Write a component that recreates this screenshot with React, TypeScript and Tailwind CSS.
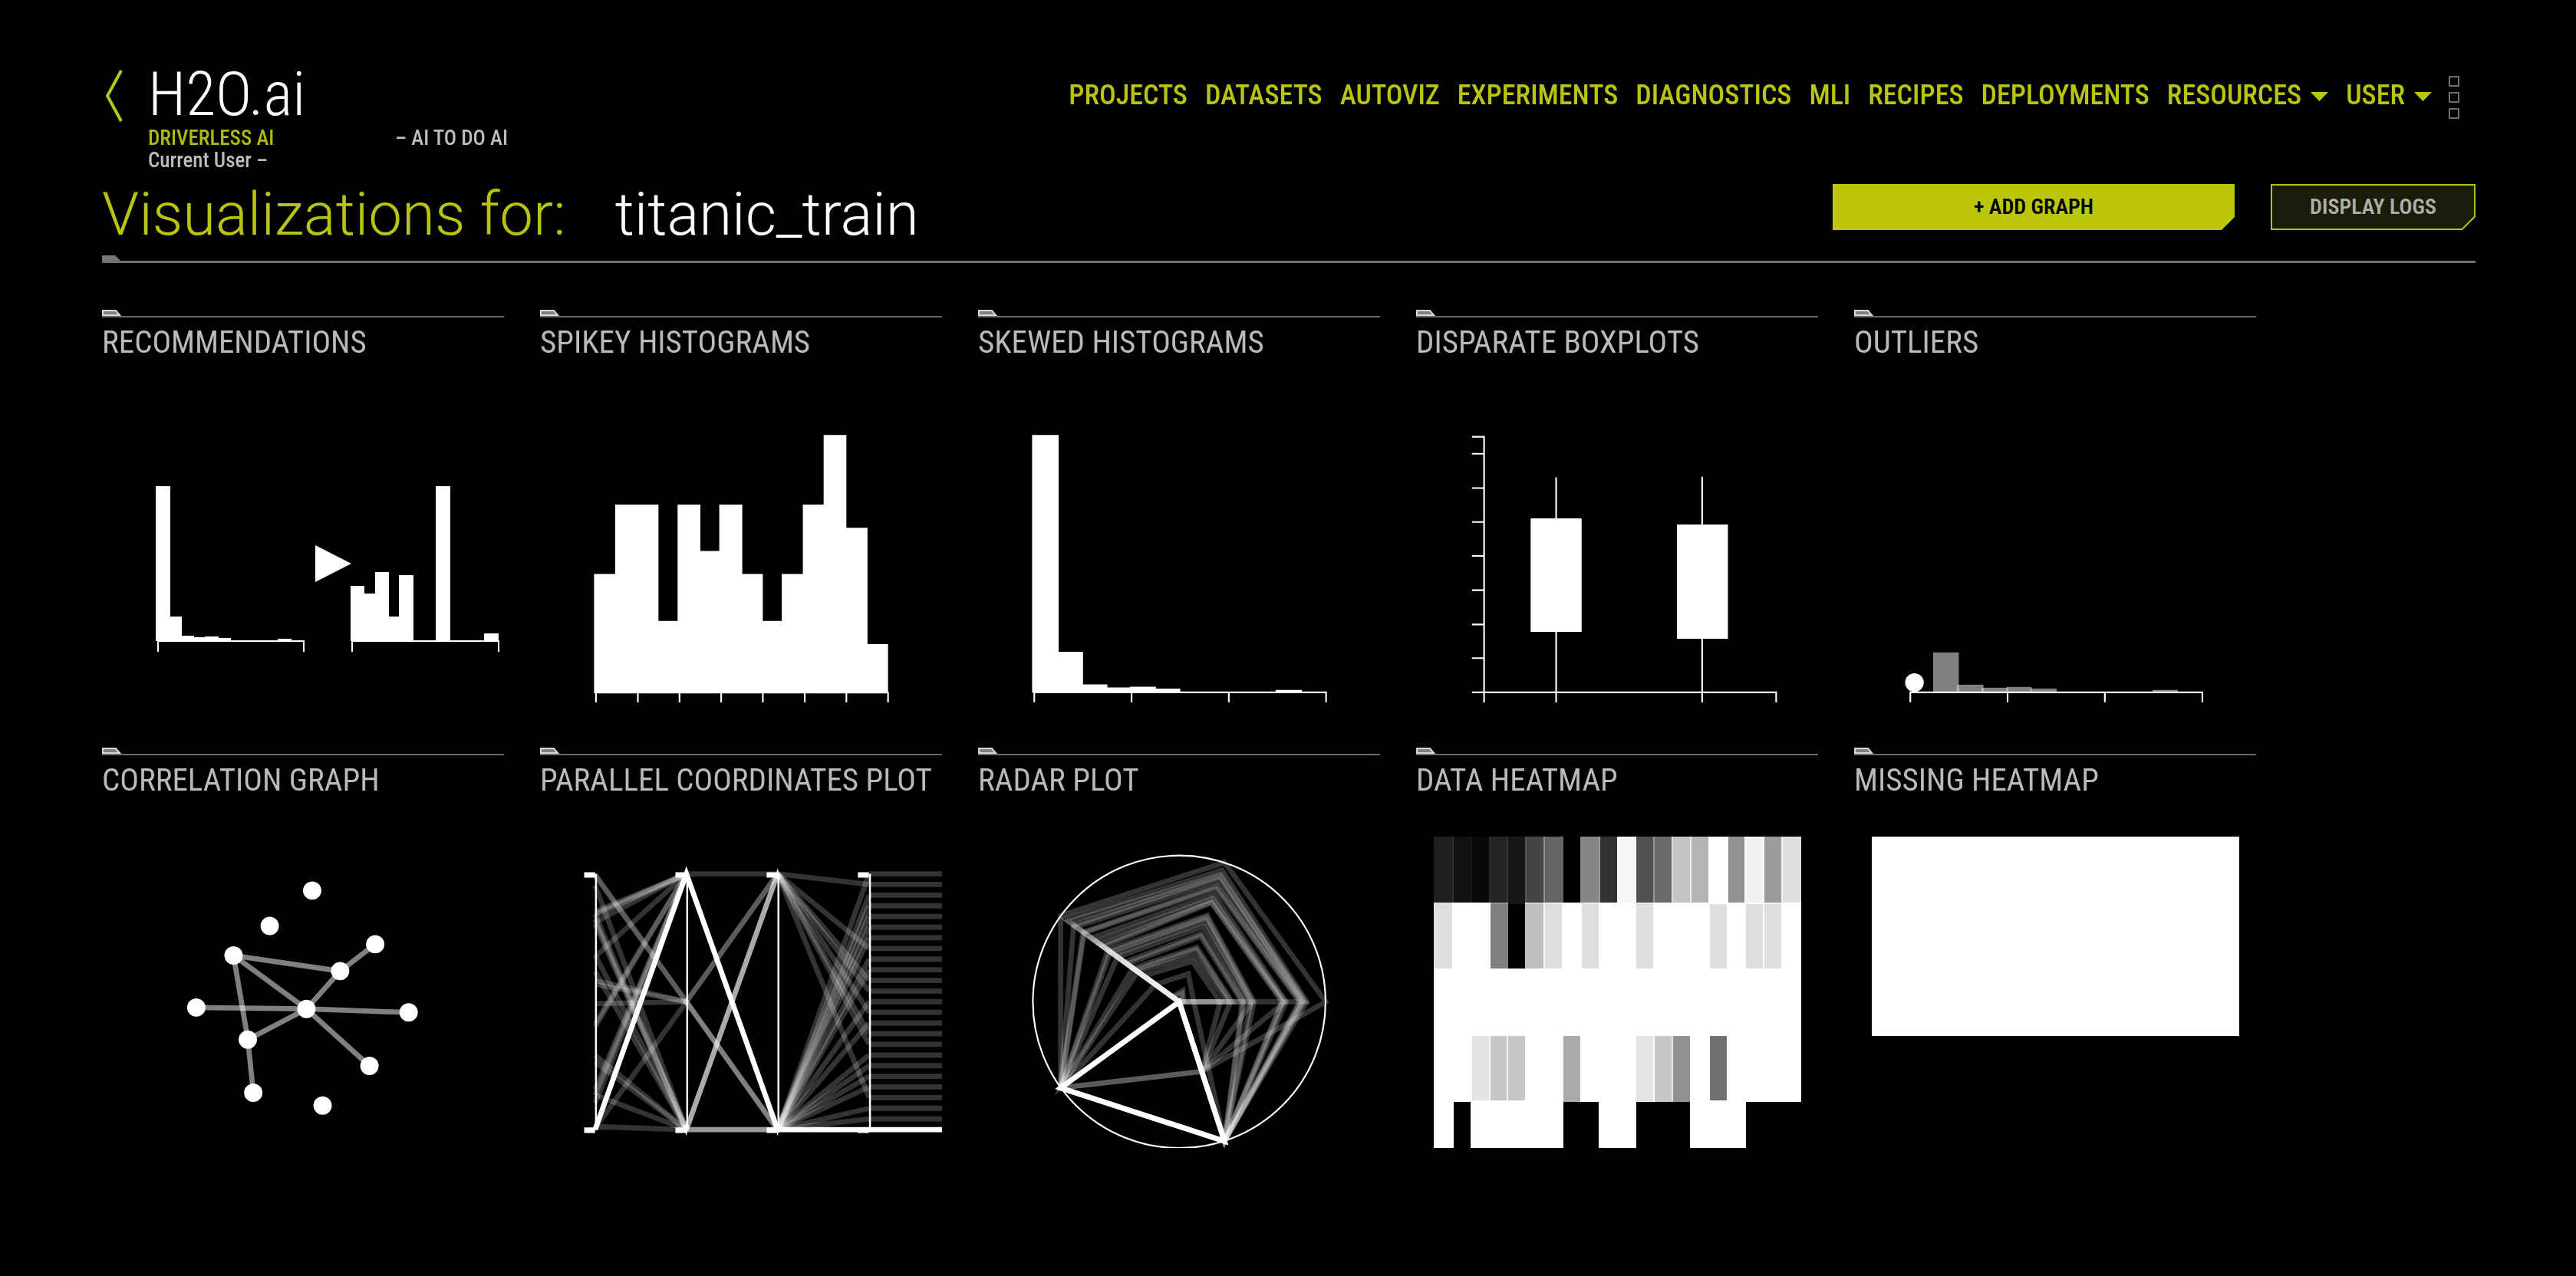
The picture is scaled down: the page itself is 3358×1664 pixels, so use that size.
import React from "react";

const NAV_LINKS = [
  "PROJECTS",
  "DATASETS",
  "AUTOVIZ",
  "EXPERIMENTS",
  "DIAGNOSTICS",
  "MLI",
  "RECIPES",
  "DEPLOYMENTS",
];
const NAV_MENUS = ["RESOURCES", "USER"];

function Chart({ box, label, children }: { box: string; label: string; children: React.ReactNode }) {
  return (
    <svg viewBox={box} className="block w-full" role="img" aria-label={label}>
      {children}
    </svg>
  );
}

function AxisX({ y, from, to, ticks }: { y: number; from: number; to: number; ticks: number[] }) {
  const d = `M${from} ${y}H${to}` + ticks.map((t) => `M${t} ${y - 3}V${y + 36}`).join("");
  return <path d={d} stroke="#fff" strokeWidth={6} fill="none" />;
}

function Recommendations() {
  return (
    <Chart box="0 0 524 461" label="Recommendations">
      <path
        fill="#fff"
        d="M70 371V169H89V339H104V364H120V366H134V365H152V367H168V371Z M229 371V368H247V371Z M324 371V299H342V309H356V281H374V339H387V285H406V371Z M435 371V169H454V371Z M498 371V361H517V371Z M278 246V294L325 270Z"
      />
      <path
        d="M72 371H264M73 370V385M263 370V385M325 371H518M326 370V385M517 370V385"
        stroke="#fff"
        strokeWidth={2}
        fill="none"
      />
    </Chart>
  );
}

function Spikey() {
  return (
    <Chart box="39 210 1467 1291" label="Spikey histograms">
      <path
        fill="#fff"
        d="M236 1439V1004H313V750H471V1175H541V750H624V920H693V750H777V1004H852V1175H921V1004H998V750H1074V496H1157V835H1234V1260H1309V1439Z"
      />
      <AxisX y={1437} from={240} to={1312} ticks={[243, 396, 548, 700, 852, 1005, 1157, 1309]} />
    </Chart>
  );
}

function Skewed() {
  return (
    <Chart box="42 210 1467 1291" label="Skewed histograms">
      <path
        fill="#fff"
        d="M239 1437V496H336V1288H425V1407H514V1418H596V1415H691V1422H780V1437Z M1128 1437V1427H1224V1437Z"
      />
      <AxisX y={1436} from={244} to={1315} ticks={[247, 602, 957, 1312]} />
    </Chart>
  );
}

const BOX_TICKS = [503, 565, 690, 814, 938, 1063, 1188, 1311];

function Boxplots() {
  return (
    <Chart box="45 210 1467 1291" label="Disparate boxplots">
      <path
        stroke="#fff"
        strokeWidth={6}
        fill="none"
        d={"M293 500V1473M249 1436H1362M1359 1436V1473M556 651V1473M1089 649V1473" + BOX_TICKS.map((y) => `M249 ${y}H293`).join("")}
      />
      <path fill="#fff" d="M463 801H649V1215H463ZM997 823H1183V1240H997Z" />
    </Chart>
  );
}

const OUTLIER_BARS = [
  [336, 430, 1290],
  [424, 520, 1408],
  [514, 609, 1419],
  [604, 696, 1416],
  [691, 787, 1422],
  [1137, 1229, 1427],
];

function Outliers() {
  return (
    <Chart box="48 210 1467 1291" label="Outliers">
      {OUTLIER_BARS.map(([a, b, top]) => (
        <rect key={a} x={a} y={top} width={b - a} height={1436 - top} fill="#fff" opacity={0.5} />
      ))}
      <AxisX y={1436} from={250} to={1322} ticks={[253, 608, 963, 1319]} />
      <circle cx={268} cy={1400} r={34} fill="#fff" />
    </Chart>
  );
}

const NODES: [number, number][] = [
  [803, 564],
  [648, 693],
  [1033, 760],
  [516, 801],
  [905, 858],
  [380, 991],
  [782, 996],
  [1155, 1009],
  [568, 1108],
  [1012, 1204],
  [588, 1302],
  [841, 1349],
];
const EDGES = [
  [3, 4],
  [2, 4],
  [3, 6],
  [4, 6],
  [3, 8],
  [5, 6],
  [6, 7],
  [6, 8],
  [6, 9],
  [8, 10],
];

function Correlation() {
  return (
    <Chart box="36 213 1467 1291" label="Correlation graph">
      {EDGES.map(([a, b]) => (
        <line
          key={`${a}-${b}`}
          x1={NODES[a][0]}
          y1={NODES[a][1]}
          x2={NODES[b][0]}
          y2={NODES[b][1]}
          stroke="#fff"
          strokeWidth={19}
          opacity={0.5}
        />
      ))}
      {NODES.map(([x, y]) => (
        <circle key={x} cx={x} cy={y} r={33.5} fill="#fff" />
      ))}
    </Chart>
  );
}

/* Line segments between neighbouring axes: x1, y1, x2, y2, opacity */
const TOP = 503;
const MID = 970;
const BOT = 1437;
const SEGMENTS: number[][] = [
  ...[640, 648, 655, 680, 805, 1050, 1062, 1290, 1310, 1340].map((y) => [240, y, 573, TOP, 0.2]),
  ...[505, 510, 892, 906, 977, 1430].map((y) => [240, y, 573, MID, 0.2]),
  ...[545, 650, 670, 685, 800, 860, 1165, 1190, 1310, 1426].map((y) => [240, y, 573, BOT, 0.2]),
  [573, TOP, 906, TOP, 0.2],
  [573, MID, 906, TOP, 0.36],
  [573, MID, 906, BOT, 0.5],
  [573, BOT, 906, TOP, 0.67],
  [573, BOT, 906, BOT, 0.6],
  ...[1, 7, 10, 11, 13, 15, 16, 21].map((i) => [906, TOP, 1240, TOP + i * 38.9, 0.2]),
  ...[0, 2, 3, 4, 5, 6, 8, 9, 12, 14, 17, 18, 19, 20, 22, 23].map((i) => [906, BOT, 1240, TOP + i * 38.9, 0.2]),
  ...Array.from({ length: 24 }, (_, i) => [1240, TOP + i * 38.9, 1520, TOP + i * 38.9, 0.2]),
];

function Parallel() {
  return (
    <Chart box="39 213 1467 1291" label="Parallel coordinates plot">
      {SEGMENTS.map(([x1, y1, x2, y2, o], i) => (
        <line key={i} x1={x1} y1={y1} x2={x2} y2={y2} stroke="#fff" strokeWidth={19} opacity={o} />
      ))}
      <path
        d="M240 1437L573 503L906 1437H1520"
        fill="none"
        stroke="#fff"
        strokeWidth={19}
        strokeMiterlimit={10}
      />
      <path d="M906 1460L896 1420H916ZM906 482L896 520H916ZM573 1460L563 1420H583Z" fill="#fff" />
      {[243, 576, 909, 1243].map((x) => (
        <path key={x} d={`M${x} 503V1437`} stroke="#fff" strokeWidth={7} />
      ))}
      {[200, 533, 866, 1199].map((x) => (
        <path key={x} d={`M${x} 497h40v20h-40zM${x} 1429h40v20h-40z`} fill="#fff" />
      ))}
    </Chart>
  );
}

/* Values of each record on the five spokes, starting at the right and going counter-clockwise */
const RECORDS: number[][] = [
  [1, 1, 1, 1, 0.5],
  [0.87, 0.945, 0.96, 0, 1],
  [0.86, 0.91, 0.93, 0, 0],
  [0.85, 0.9, 0.89, 1, 1],
  [0.84, 0.87, 0.87, 0, 1],
  [0.83, 0.83, 0.81, 1, 1],
  [0.82, 0.815, 0.8, 1, 1],
  [0.73, 0.77, 0.74, 0, 1],
  [0.72, 0.74, 0.7, 0, 0.5],
  [0.71, 0.72, 0.66, 0, 1],
  [0.7, 0.71, 0.64, 0, 1],
  [0.51, 0.62, 0.6, 1, 1],
  [0.5, 0.605, 0.58, 1, 0.5],
  [0.49, 0.58, 0.55, 0, 1],
  [0.47, 0.54, 0.52, 1, 0],
  [0.44, 0.49, 0.46, 0, 1],
  [0.43, 0.47, 0.44, 0, 1],
  [0.36, 0.39, 0.39, 1, 0],
  [0.35, 0.375, 0.37, 0, 0.5],
  [0.33, 0.33, 0.35, 1, 0],
  [0.28, 0.29, 0.3, 0, 0.5],
  [0.1, 0.2, 0.2, 1, 1],
  [0.03, 0.08, 0.06, 0, 0],
  [0.02, 0.06, 0.05, 0, 0],
];

function spokes(values: number[]) {
  return values
    .map((v, i) => {
      const a = (i * 2 * Math.PI) / 5;
      return `${(776 + 535 * v * Math.cos(a)).toFixed(1)},${(970 - 535 * v * Math.sin(a)).toFixed(1)}`;
    })
    .join(" ");
}

function Radar() {
  return (
    <Chart box="42 213 1467 1291" label="Radar plot">
      {RECORDS.map((r, i) => (
        <polygon key={i} points={spokes(r)} fill="none" stroke="#fff" strokeWidth={19} opacity={0.2} />
      ))}
      <polygon points={spokes([0, 0, 0, 1, 1])} fill="none" stroke="#fff" strokeWidth={19} />
      <circle cx={776} cy={970} r={534} fill="none" stroke="#fff" strokeWidth={6} />
    </Chart>
  );
}

const HEAT: string[] = [
  "1f 12 08 24 17 45 65 00 86 32 f5 51 6a c4 b4 ff 91 f1 9c de",
  "de ff ff 80 00 bf de ff de ff ff de ff ff ff de ff de de ff",
  "ff ff ff ff ff ff ff ff ff ff ff ff ff ff ff ff ff ff ff ff",
  "ff ff e3 c7 c7 ff ff aa ff ff ff e3 c7 91 ff 70 ff ff ff ff",
  "ff 00 ff ff ff ff ff 00 00 ff ff 00 00 00 ff ff ff 00 00 00",
];

/* Cells overlap by two units, which leaves a light seam between neighbours */
function DataHeatmap() {
  return (
    <Chart box="0 0 524 461" label="Data heatmap">
      {HEAT.map((row, r) =>
        row.split(" ").map((v, c) => {
          const left = Math.round(23 + c * 23.85);
          const right = Math.round(23 + (c + 1) * 23.85) + 2;
          const top = Math.round(55 + r * 86);
          const bottom = Math.round(55 + (r + 1) * 86) + 2;
          return (
            <rect
              key={`${r}-${c}`}
              x={left}
              y={top}
              width={right - left}
              height={bottom - top}
              fill={`#${v}${v}${v}`}
              className="mix-blend-screen"
            />
          );
        }),
      )}
    </Chart>
  );
}

function MissingHeatmap() {
  return (
    <Chart box="0 0 524 461" label="Missing heatmap">
      <rect x={23} y={55} width={479} height={260} fill="#fff" />
    </Chart>
  );
}

const CARDS: [string, () => React.ReactElement][] = [
  ["RECOMMENDATIONS", Recommendations],
  ["SPIKEY HISTOGRAMS", Spikey],
  ["SKEWED HISTOGRAMS", Skewed],
  ["DISPARATE BOXPLOTS", Boxplots],
  ["OUTLIERS", Outliers],
  ["CORRELATION GRAPH", Correlation],
  ["PARALLEL COORDINATES PLOT", Parallel],
  ["RADAR PLOT", Radar],
  ["DATA HEATMAP", DataHeatmap],
  ["MISSING HEATMAP", MissingHeatmap],
];

export default function App() {
  return (
    <div className="min-h-screen bg-black pt-[83px] pr-[131px] pb-12 pl-[133px] font-['Roboto_Condensed',Roboto,sans-serif] text-white">
      <header className="flex items-start justify-between">
        <div className="flex items-start">
          <button type="button" aria-label="Back" className="mt-2 w-[60px] shrink-0">
            <svg viewBox="0 0 60 68" className="block w-[60px]">
              <path d="M25 1L7 34L25 67" fill="none" stroke="#bac60a" strokeWidth={4} />
            </svg>
          </button>
          <div>
            <h1 className="mb-[3px] text-[80px] leading-[80px] font-light">H2O.ai</h1>
            <div className="grid grid-cols-[322px_auto] text-[27px] leading-[29px] font-medium text-[#bdbdbd]">
              <span className="text-[#b0bb12]">DRIVERLESS AI</span>
              <span>– AI TO DO AI</span>
              <span>Current User –</span>
            </div>
          </div>
        </div>
        <div className="mt-4 flex items-start gap-[22px]">
          <nav className="mt-[7px] flex items-center gap-[23px] text-[36px] leading-[36px] font-medium text-[#b8c410]">
            {NAV_LINKS.map((n) => (
              <a key={n} href="#">
                {n}
              </a>
            ))}
            {NAV_MENUS.map((n) => (
              <button key={n} type="button" className="flex items-center gap-3">
                {n}
                <svg viewBox="0 0 23 12" className="mt-1 w-[23px]">
                  <path d="M0 0H23L11.5 12Z" fill="#bac60a" />
                </svg>
              </button>
            ))}
          </nav>
          <button type="button" aria-label="More" className="mr-[21px] flex flex-col gap-[7px]">
            <span className="size-[14px] border-2 border-[#6e6e6e]" />
            <span className="size-[14px] border-2 border-[#6e6e6e]" />
            <span className="size-[14px] border-2 border-[#6e6e6e]" />
          </button>
        </div>
      </header>

      <div className="mt-4 flex items-start justify-between">
        <h2 className="flex gap-16 font-[Roboto,sans-serif] text-[78px] leading-[80px] font-light">
          <span className="text-[#b8c410]">Visualizations for:</span>
          <span>titanic_train</span>
        </h2>
        <div className="flex gap-[47px] text-[28px] leading-[28px] font-semibold">
          <button
            type="button"
            className="h-[60px] w-[524px] bg-[#bcc60b] text-black [clip-path:polygon(0_0,100%_0,100%_calc(100%-17px),calc(100%-17px)_100%,0_100%)]"
          >
            + ADD GRAPH
          </button>
          <button
            type="button"
            className="h-[60px] w-[267px] bg-[#b5bf1c] p-[2px] text-[#aeaea6] [clip-path:polygon(0_0,100%_0,100%_calc(100%-17px),calc(100%-17px)_100%,0_100%)]"
          >
            <span className="flex h-full items-center justify-center bg-[#1a1b08] [clip-path:polygon(0_0,100%_0,100%_calc(100%-16px),calc(100%-16px)_100%,0_100%)]">
              DISPLAY LOGS
            </span>
          </button>
        </div>
      </div>

      <div className="mt-[13px] border-b-[3px] border-[#707070]">
        <svg viewBox="0 0 24 7" className="block w-[24px]">
          <path d="M0 0H17L24 7H0Z" fill="#777" />
        </svg>
      </div>

      <main className="mt-[61px] grid grid-cols-[repeat(auto-fill,524px)] gap-x-[47px] gap-y-[49px]">
        {CARDS.map(([title, Drawing]) => (
          <section key={title}>
            <div className="border-b-2 border-[#6a6a6a]">
              <svg viewBox="0 0 25 8" className="block w-[25px]">
                <path d="M1 1H18L23 7H1Z" fill="#808080" stroke="#d8d8d8" strokeWidth={2} />
              </svg>
            </div>
            <h3 className="pt-[13px] text-[41px] leading-[38px] text-[#bababa]">{title}</h3>
            <Drawing />
          </section>
        ))}
      </main>
    </div>
  );
}
